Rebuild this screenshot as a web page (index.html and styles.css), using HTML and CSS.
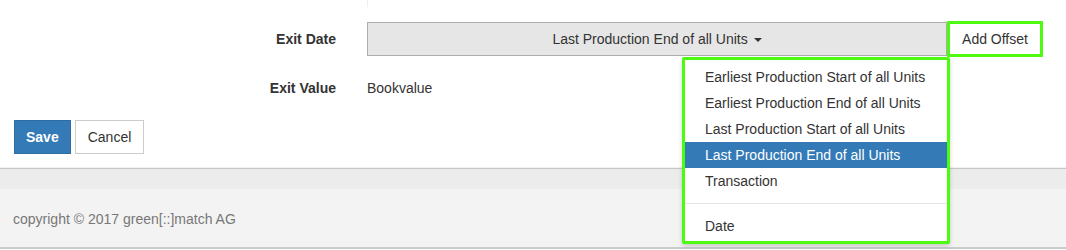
FILE: index.html
```html
<!DOCTYPE html>
<html lang="en">
<head>
<meta charset="utf-8">
<title>Exit settings</title>
<link rel="stylesheet" href="styles.css">
</head>
<body>
<div class="page">
  <div class="top-stub"></div>
  <form class="form">
    <div class="row">
      <label class="label">Exit Date</label>
      <div class="field">
        <button type="button" class="select-btn">Last Production End of all Units <span class="caret"></span></button>
        <ul class="menu">
          <li class="item">Earliest Production Start of all Units</li>
          <li class="item">Earliest Production End of all Units</li>
          <li class="item">Last Production Start of all Units</li>
          <li class="item active">Last Production End of all Units</li>
          <li class="item">Transaction</li>
          <li class="divider"></li>
          <li class="item">Date</li>
        </ul>
      </div>
      <button type="button" class="offset-btn">Add Offset</button>
    </div>
    <div class="row row-value">
      <label class="label">Exit Value</label>
      <div class="value">Bookvalue</div>
    </div>
    <div class="actions">
      <button type="button" class="btn btn-primary">Save</button>
      <button type="button" class="btn btn-default">Cancel</button>
    </div>
  </form>
  <footer class="footer">
    <div class="footer-band"></div>
    <div class="footer-main">copyright © 2017 green[::]match AG</div>
  </footer>
</div>
</body>
</html>
```

FILE: styles.css
```css
* { box-sizing: border-box; }
html, body { margin: 0; padding: 0; background: #fff; }
body {
  font-family: "Liberation Sans", Arial, sans-serif;
  font-size: 14px;
  color: #333;
  width: 1066px;
  height: 250px;
  overflow: hidden;
}
.top-stub {
  height: 7px;
  margin-left: 367px;
  border-left: 1px solid #efefef;
}
.form {
  padding-top: 15px;
  margin: 0;
}
.row {
  display: flex;
  align-items: center;
  height: 34px;
}
.row-value { margin-top: 15px; }
.label {
  width: 336px;
  margin-right: 31px;
  text-align: right;
  font-weight: bold;
  line-height: 34px;
}
.field {
  position: relative;
  width: 580px;
  height: 34px;
}
.select-btn {
  display: block;
  width: 100%;
  height: 34px;
  margin: 0;
  padding: 0 12px;
  background: #e6e6e6;
  border: 1px solid #adadad;
  border-radius: 0;
  font: inherit;
  color: #333;
  text-align: center;
}
.caret {
  display: inline-block;
  width: 0;
  height: 0;
  margin-left: 2px;
  vertical-align: middle;
  border-top: 4px solid #333;
  border-left: 4px solid transparent;
  border-right: 4px solid transparent;
}
.offset-btn {
  width: 96px;
  height: 36px;
  margin: 0;
  padding: 0;
  background: #fff;
  border: 3px solid #4cfb10;
  border-radius: 1px;
  font: inherit;
  color: #333;
  text-align: center;
}
.menu {
  position: absolute;
  top: 35px;
  right: -3px;
  width: 268px;
  margin: 0;
  padding: 4px 0 2px;
  list-style: none;
  background: #fff;
  border: 3px solid #4cfb10;
  border-radius: 2px;
  box-shadow: 0 2px 4px rgba(0,0,0,0.18);
  z-index: 10;
}
.item {
  padding: 3px 20px;
  line-height: 20px;
  color: #333;
  white-space: nowrap;
}
.item.active {
  background: #337ab7;
  color: #fff;
}
.divider {
  height: 1px;
  margin: 9px 0;
  background: #e5e5e5;
}
.value { line-height: 34px; }
.actions {
  display: flex;
  gap: 4px;
  margin-top: 15px;
  padding-left: 14px;
}
.btn {
  height: 34px;
  margin: 0;
  padding: 0 12px;
  font: inherit;
  border-radius: 0;
  border: 1px solid #ccc;
}
.btn-primary {
  padding: 0 11px;
  background: #337ab7;
  border-color: #2e6da4;
  color: #fff;
  font-weight: bold;
}
.btn-default {
  background: #fff;
  color: #333;
}
.footer {
  margin-top: 14px;
  border-top: 1px solid #c6c6c6;
  box-shadow: 0 -1px 1px rgba(0,0,0,0.05);
}
.footer-band {
  height: 20px;
  background: #ececec;
}
.footer-main {
  height: 60px;
  padding: 20px 0 0 13px;
  line-height: 20px;
  background: #f3f3f3;
  color: #777;
  border-bottom: 2px solid #cbcbcb;
}
```
